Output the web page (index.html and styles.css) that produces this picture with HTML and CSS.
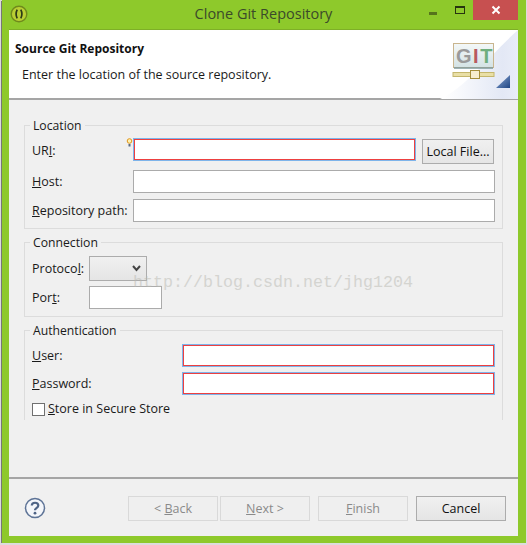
FILE: index.html
```html
<!DOCTYPE html>
<html lang="en">
<head>
    <meta charset="UTF-8">
    <title>Clone Git Repository</title>
    <link rel="stylesheet" href="styles.css">
</head>
<body>
    <div class="window">
        <div class="titlebar">
            <svg class="app-icon" width="18" height="18" viewBox="0 0 18 18">
                <circle cx="9" cy="9" r="7.8" fill="#b9cf34" stroke="#6f8a1c" stroke-width="1.4"/>
                <path d="M7.2 4.6 Q5 9 7.2 13.4 M10.8 4.6 Q13 9 10.8 13.4" fill="none" stroke="#2c3a18" stroke-width="1.7"/>
            </svg>
            <span class="title-text">Clone Git Repository</span>
            <div class="controls">
                <span class="ctl-min"></span>
                <span class="ctl-max"></span>
                <span class="ctl-close">
                    <svg width="10" height="10" viewBox="0 0 10 10">
                        <path d="M1.5 1.5 L8.5 8.5 M8.5 1.5 L1.5 8.5" stroke="#fff" stroke-width="2"/>
                    </svg>
                </span>
            </div>
        </div>

        <div class="dialog">
            <div class="banner">
                <div class="banner-text">
                    <h1>Source Git Repository</h1>
                    <p>Enter the location of the source repository.</p>
                </div>
                <svg class="git-art" width="78" height="69" viewBox="0 0 78 69">
                    <defs>
                        <linearGradient id="wash" x1="0" y1="0" x2="1" y2="0">
                            <stop offset="0.05" stop-color="#ffffff"/>
                            <stop offset="0.8" stop-color="#e3e8f5"/>
                            <stop offset="1" stop-color="#e9edf8"/>
                        </linearGradient>
                        <linearGradient id="screen" x1="0" y1="0" x2="0" y2="1">
                            <stop offset="0" stop-color="#f4f8f8"/>
                            <stop offset="1" stop-color="#d3e2e4"/>
                        </linearGradient>
                        <linearGradient id="corner" x1="0" y1="0" x2="1" y2="1">
                            <stop offset="0" stop-color="#8fabd6"/>
                            <stop offset="1" stop-color="#1f4584"/>
                        </linearGradient>
                    </defs>
                    <path d="M0 69 C25 58 50 25 78 0 L78 69 Z" fill="url(#wash)"/>
                    <rect x="13.500" y="13.500" width="40" height="24" fill="url(#screen)" stroke="#c9b58e"/>
                    <path d="M14 38 H53" stroke="#7f9a9c" stroke-width="1.500"/>
                    <text class="git-letters" x="16" y="33"><tspan fill="#9a9a9a">G</tspan><tspan fill="#b85a5e">I</tspan><tspan fill="#6fae7e">T</tspan></text>
                    <rect x="13" y="42.500" width="41" height="4" fill="#e9dfa6" stroke="#c4b66c" stroke-width="1"/>
                    <rect x="30.500" y="40.500" width="9" height="8" fill="#f6eed0" stroke="#a58f3c"/>
                    <path d="M70 45 L70 58 L56 58 Z" fill="url(#corner)"/>
                </svg>
            </div>

            <div class="form-area">
                <fieldset class="group group-location">
                    <legend>Location</legend>
                    <div class="rows rows-location">
                        <label>UR<u>I</u>:</label>
                        <div class="uri-cell">
                            <svg class="bulb" width="7" height="9" viewBox="0 0 7 9">
                                <circle cx="3.5" cy="3" r="2.300" fill="#fff2b0" stroke="#e0941c" stroke-width="1"/>
                                <rect x="2.500" y="6" width="2" height="2.500" fill="#5b6a80"/>
                            </svg>
                            <div class="required-wrap required-uri"><input class="field-inner" type="text"></div>
                            <button class="btn btn-local">Local File...</button>
                        </div>
                        <label><u>H</u>ost:</label>
                        <input class="field" type="text">
                        <label><u>R</u>epository path:</label>
                        <input class="field" type="text">
                    </div>
                </fieldset>

                <fieldset class="group">
                    <legend>Connection</legend>
                    <div class="rows rows-connection">
                        <label>Protoco<u>l</u>:</label>
                        <div class="combo">
                            <svg width="9" height="7" viewBox="0 0 9 7">
                                <path d="M1 1 L4.500 5 L8 1" fill="none" stroke="#444" stroke-width="2"/>
                            </svg>
                        </div>
                        <label>Por<u>t</u>:</label>
                        <input class="field field-port" type="text">
                    </div>
                </fieldset>

                <fieldset class="group group-open">
                    <legend>Authentication</legend>
                    <div class="rows rows-auth">
                        <label><u>U</u>ser:</label>
                        <div class="required-wrap"><input class="field-inner" type="text"></div>
                        <label><u>P</u>assword:</label>
                        <div class="required-wrap"><input class="field-inner" type="text"></div>
                    </div>
                    <div class="store-row">
                        <span class="checkbox"></span>
                        <span class="store-label"><u>S</u>tore in Secure Store</span>
                    </div>
                </fieldset>
            </div>

            <div class="footer">
                <svg class="help" width="22" height="22" viewBox="0 0 22 22">
                    <circle cx="11" cy="11" r="9.500" fill="#f4f6fa" stroke="#5d7396" stroke-width="1.500"/>
                    <path d="M7.800 8.500 C7.800 4.800 14.300 4.800 14.300 8.500 C14.300 10.800 11 10.800 11 13.300" fill="none" stroke="#4f6486" stroke-width="2.200"/>
                    <circle cx="11" cy="16.200" r="1.400" fill="#4f6486"/>
                </svg>
                <div class="buttons">
                    <button class="btn btn-wide" disabled>&lt; <u>B</u>ack</button>
                    <button class="btn btn-wide" disabled><u>N</u>ext &gt;</button>
                    <button class="btn btn-wide btn-finish" disabled><u>F</u>inish</button>
                    <button class="btn btn-wide btn-cancel">Cancel</button>
                </div>
            </div>

            <div class="watermark">http://blog.csdn.net/jhg1204</div>
        </div>
    </div>
</body>
</html>
```

FILE: styles.css
```css
* {
    box-sizing: border-box;
}
body {
    margin: 0;
    background-color: #dcdcdc;
    font-family: "Open Sans", "Noto Sans", sans-serif;
    font-size: 12.5px;
    color: #1a1a1a;
}
.window {
    width: 524px;
    height: 543px;
    margin-left: 2px;
    padding: 0 8px 7px 7px;
    background-color: #8ec92b;
    display: flex;
    flex-direction: column;
    box-shadow: -1px 1px 0 #777;
}
.titlebar {
    height: 30px;
    flex-shrink: 0;
    position: relative;
    display: flex;
    align-items: center;
    justify-content: center;
    border-bottom: 1px solid #7eaf27;
}
.app-icon {
    position: absolute;
    left: 1px;
    top: 5px;
}
.title-text {
    font-size: 14.500px;
    color: #3b4a2a;
    margin-bottom: 2px;
}
.controls {
    position: absolute;
    right: 0;
    top: 0;
    display: flex;
}
.ctl-min {
    width: 8px;
    height: 3px;
    margin-top: 12px;
    background-color: #56741c;
}
.ctl-max {
    width: 10px;
    height: 8px;
    margin: 6px 8px 0 18px;
    border: 1px solid #27340f;
    border-top-width: 2px;
}
.ctl-close {
    width: 45px;
    height: 20px;
    background-color: #c75050;
    display: flex;
    align-items: center;
    justify-content: center;
}
.dialog {
    flex: 1;
    position: relative;
    display: flex;
    flex-direction: column;
    background-color: #f0f0f0;
}
.banner {
    height: 70px;
    flex-shrink: 0;
    display: flex;
    justify-content: space-between;
    background-color: #fff;
    border-bottom: 2px solid #a5a5a5;
}
.banner-text {
    padding: 11px 0 0 6px;
}
h1 {
    margin: 0;
    font-size: 12px;
    line-height: 16px;
    font-weight: bold;
    color: #111;
}
p {
    margin: 10px 0 0 7px;
    line-height: 16px;
}
.git-art {
    flex-shrink: 0;
}
.git-letters {
    font-family: "Liberation Sans", sans-serif;
    font-weight: bold;
    font-size: 20px;
    letter-spacing: 1.5px;
}
.form-area {
    padding: 17px 15px 0;
}
.group {
    margin: 0 0 5px;
    padding: 0 7px 7px;
    border: 1px solid #dcdcdc;
    min-width: 0;
}
.group-location {
    padding-bottom: 6px;
}
.group-open {
    border-bottom: none;
    height: 98px;
    margin-bottom: 0;
}
legend {
    margin-left: -2px;
    padding: 0 3px;
    height: 16px;
    line-height: 17px;
    font-size: 12.2px;
}
.rows {
    display: grid;
    align-items: center;
    padding-top: 5px;
}
.rows-location {
    grid-template-columns: 101px 1fr;
    grid-template-rows: 26px 23px 23px;
    row-gap: 6px;
}
.rows-location input.field:last-child {
    margin-top: -1px;
}
.rows-connection {
    grid-template-columns: 57px 1fr;
    grid-template-rows: 25px 23px;
    row-gap: 5px;
    padding-top: 6px;
}
.rows-auth {
    grid-template-columns: 150px 1fr;
    grid-template-rows: 23px 23px;
    row-gap: 5px;
    padding-top: 6px;
}
label {
    line-height: 16px;
}
.uri-cell {
    position: relative;
    display: flex;
    align-items: flex-start;
    height: 26px;
}
.bulb {
    position: absolute;
    left: -7px;
    top: 0;
}
.field {
    display: block;
    width: 100%;
    height: 23px;
    padding: 0;
    background-color: #fff;
    border: 1px solid #ababab;
    border-radius: 0;
}
.required-wrap {
    height: 23px;
    border: 1px solid #7eb4ea;
}
.required-uri {
    width: 283px;
}
.field-inner {
    display: block;
    width: 100%;
    height: 100%;
    padding: 0;
    background-color: #fff;
    border: 1px solid #ed4040;
    border-radius: 0;
}
.field-port {
    width: 73px;
}
.combo {
    width: 58px;
    height: 25px;
    padding-right: 5px;
    display: flex;
    align-items: center;
    justify-content: flex-end;
    border: 1px solid #acacac;
    background: linear-gradient(#f0f0f0, #e5e5e5);
}
.btn {
    font-family: inherit;
    font-size: 12.5px;
    color: #111;
    padding: 0;
    background: linear-gradient(#f0f0f0, #e5e5e5);
    border: 1px solid #acacac;
    border-radius: 0;
}
.btn:disabled {
    color: #8a8a8a;
    background: #efefef;
    border-color: #d9d9d9;
}
.btn-local {
    width: 72px;
    height: 25px;
    margin: 1px 0 0 6px;
}
.store-row {
    display: flex;
    align-items: flex-start;
    gap: 3px;
    margin-top: 8px;
}
.checkbox {
    width: 13px;
    height: 13px;
    background-color: #fff;
    border: 1px solid #707070;
}
.store-label {
    line-height: 13px;
    margin-top: -1px;
}
.footer {
    height: 59px;
    margin-top: auto;
    padding: 17px 12px 0 15px;
    display: flex;
    justify-content: space-between;
    border-top: 2px solid #a5a5a5;
}
.help {
    margin-top: 1px;
}
.buttons {
    display: flex;
    gap: 2px;
}
.btn-wide {
    width: 90px;
    height: 25px;
}
.btn-finish,
.btn-cancel {
    margin-left: 6px;
}
.watermark {
    position: absolute;
    left: 124px;
    top: 243px;
    font-family: "Liberation Mono", monospace;
    font-size: 16.670px;
    line-height: 20px;
    color: #b9b9b2;
    opacity: 0.5;
}
```
